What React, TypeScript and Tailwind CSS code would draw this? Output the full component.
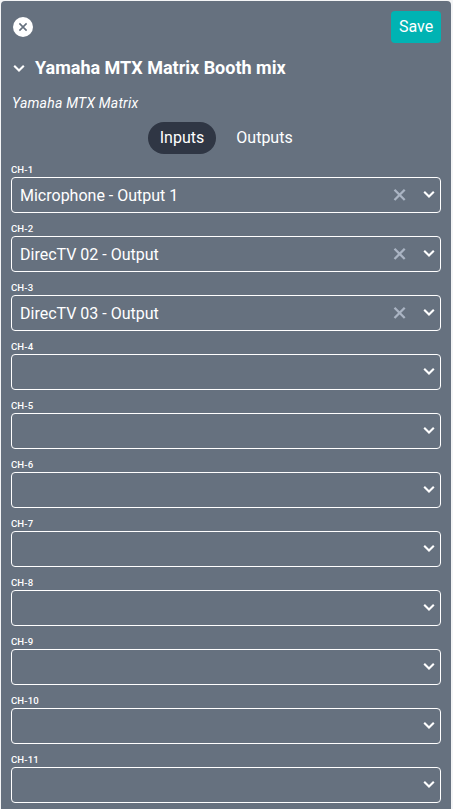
const labels = ["Microphone - Output 1", "DirecTV 02 - Output", "DirecTV 03 - Output", "", "", "", "", "", "", "", ""];

function Chevron({ className }: { className?: string }) {
  return (
    <svg className={className} width="20" height="20" viewBox="0 0 20 20" fill="none">
      <path d="m5.2 7.7 4.8 4.8 4.8-4.8" stroke="currentColor" strokeWidth="2.1" />
    </svg>
  );
}

function Field({ index, value }: { index: number; value: string }) {
  return (
    <div className="h-[59px]">
      <div className="h-[14px] text-[9.6px] font-medium leading-[14px] tracking-[0.1px]">CH-{index}</div>
      <div className="flex h-9 items-center rounded border border-white pl-2 pr-[1px]">
        <span className="relative top-px flex-1 text-base leading-6">{value}</span>
        {value && (
          <svg className="-mt-px mr-[9px] text-[#aab4c3]" width="20" height="20" viewBox="0 0 20 20" fill="none">
            <path d="m4.5 4.8 10.2 10.2m0-10.2L4.5 15" stroke="currentColor" strokeWidth="2.3" />
          </svg>
        )}
        <Chevron className="-mt-[2px]" />
      </div>
    </div>
  );
}

export default function App() {
  return (
    <div className="h-[809px] overflow-hidden bg-[#f4f5f6] pl-px pr-[2px] pt-px font-[Roboto,sans-serif] text-white">
      <div className="h-[808px] overflow-hidden rounded-t bg-[#66717f] px-[10px] pt-[10px]">
        <div className="flex h-8 items-center justify-between">
          <svg className="ml-[2px]" width="20" height="20" viewBox="0 0 20 20">
            <circle cx="10" cy="10" r="10" fill="#fff" />
            <path d="m6.4 6.4 7.2 7.2m0-7.2-7.2 7.2" stroke="#66717f" strokeWidth="1.6" />
          </svg>
          <button className="h-8 w-[50px] rounded bg-[#00b3b3] text-base">Save</button>
        </div>
        <div className="mt-[13px] flex h-6 items-center">
          <Chevron className="-ml-[2px]" />
          <h1 className="ml-[6px] text-lg font-bold">Yamaha MTX Matrix Booth mix</h1>
        </div>
        <div className="mt-[13px] h-5 pl-px text-sm italic leading-5 tracking-[0.22px]">Yamaha MTX Matrix</div>
        <div className="mt-[9px] flex h-8 justify-center gap-2 pl-px">
          <button className="w-[68px] rounded-full bg-[#2f3644]">Inputs</button>
          <button className="w-[81px]">Outputs</button>
        </div>
        <div className="mt-[9px]">
          {labels.map((value, i) => <Field key={i} index={i + 1} value={value} />)}
        </div>
      </div>
    </div>
  );
}
